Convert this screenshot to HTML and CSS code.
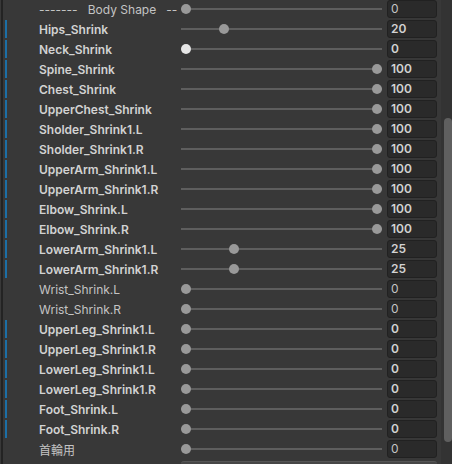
FILE: index.html
```html
<!DOCTYPE html>
<html lang="en">
<head>
    <meta charset="UTF-8">
    <title>Body Shape</title>
    <link rel="stylesheet" href="styles.css">
</head>
<body>
    <div class="panel">
        <div class="gutter"></div>
        <div class="list">
            <div class="row">
                <span class="mark"></span>
                <span class="label">-------   Body Shape   --</span>
                <div class="slider"><span class="thumb" style="left:0px"></span></div>
                <span class="field">0</span>
            </div>
            <div class="row changed">
                <span class="mark"></span>
                <span class="label">Hips_Shrink</span>
                <div class="slider"><span class="thumb" style="left:38px"></span></div>
                <span class="field">20</span>
            </div>
            <div class="row changed">
                <span class="mark"></span>
                <span class="label">Neck_Shrink</span>
                <div class="slider"><span class="thumb hot" style="left:0px"></span></div>
                <span class="field">0</span>
            </div>
            <div class="row changed">
                <span class="mark"></span>
                <span class="label">Spine_Shrink</span>
                <div class="slider"><span class="thumb" style="left:191px"></span></div>
                <span class="field">100</span>
            </div>
            <div class="row changed">
                <span class="mark"></span>
                <span class="label">Chest_Shrink</span>
                <div class="slider"><span class="thumb" style="left:191px"></span></div>
                <span class="field">100</span>
            </div>
            <div class="row changed">
                <span class="mark"></span>
                <span class="label">UpperChest_Shrink</span>
                <div class="slider"><span class="thumb" style="left:191px"></span></div>
                <span class="field">100</span>
            </div>
            <div class="row changed">
                <span class="mark"></span>
                <span class="label">Sholder_Shrink1.L</span>
                <div class="slider"><span class="thumb" style="left:191px"></span></div>
                <span class="field">100</span>
            </div>
            <div class="row changed">
                <span class="mark"></span>
                <span class="label">Sholder_Shrink1.R</span>
                <div class="slider"><span class="thumb" style="left:191px"></span></div>
                <span class="field">100</span>
            </div>
            <div class="row changed">
                <span class="mark"></span>
                <span class="label">UpperArm_Shrink1.L</span>
                <div class="slider"><span class="thumb" style="left:191px"></span></div>
                <span class="field">100</span>
            </div>
            <div class="row changed">
                <span class="mark"></span>
                <span class="label">UpperArm_Shrink1.R</span>
                <div class="slider"><span class="thumb" style="left:191px"></span></div>
                <span class="field">100</span>
            </div>
            <div class="row changed">
                <span class="mark"></span>
                <span class="label">Elbow_Shrink.L</span>
                <div class="slider"><span class="thumb" style="left:191px"></span></div>
                <span class="field">100</span>
            </div>
            <div class="row changed">
                <span class="mark"></span>
                <span class="label">Elbow_Shrink.R</span>
                <div class="slider"><span class="thumb" style="left:191px"></span></div>
                <span class="field">100</span>
            </div>
            <div class="row changed">
                <span class="mark"></span>
                <span class="label">LowerArm_Shrink1.L</span>
                <div class="slider"><span class="thumb" style="left:48px"></span></div>
                <span class="field">25</span>
            </div>
            <div class="row changed">
                <span class="mark"></span>
                <span class="label">LowerArm_Shrink1.R</span>
                <div class="slider"><span class="thumb" style="left:48px"></span></div>
                <span class="field">25</span>
            </div>
            <div class="row">
                <span class="mark"></span>
                <span class="label">Wrist_Shrink.L</span>
                <div class="slider"><span class="thumb" style="left:0px"></span></div>
                <span class="field">0</span>
            </div>
            <div class="row">
                <span class="mark"></span>
                <span class="label">Wrist_Shrink.R</span>
                <div class="slider"><span class="thumb" style="left:0px"></span></div>
                <span class="field">0</span>
            </div>
            <div class="row changed">
                <span class="mark"></span>
                <span class="label">UpperLeg_Shrink1.L</span>
                <div class="slider"><span class="thumb" style="left:0px"></span></div>
                <span class="field">0</span>
            </div>
            <div class="row changed">
                <span class="mark"></span>
                <span class="label">UpperLeg_Shrink1.R</span>
                <div class="slider"><span class="thumb" style="left:0px"></span></div>
                <span class="field">0</span>
            </div>
            <div class="row changed">
                <span class="mark"></span>
                <span class="label">LowerLeg_Shrink1.L</span>
                <div class="slider"><span class="thumb" style="left:0px"></span></div>
                <span class="field">0</span>
            </div>
            <div class="row changed">
                <span class="mark"></span>
                <span class="label">LowerLeg_Shrink1.R</span>
                <div class="slider"><span class="thumb" style="left:0px"></span></div>
                <span class="field">0</span>
            </div>
            <div class="row changed">
                <span class="mark"></span>
                <span class="label">Foot_Shrink.L</span>
                <div class="slider"><span class="thumb" style="left:0px"></span></div>
                <span class="field">0</span>
            </div>
            <div class="row changed">
                <span class="mark"></span>
                <span class="label">Foot_Shrink.R</span>
                <div class="slider"><span class="thumb" style="left:0px"></span></div>
                <span class="field">0</span>
            </div>
            <div class="row">
                <span class="mark"></span>
                <span class="label">首輪用</span>
                <div class="slider"><span class="thumb" style="left:0px"></span></div>
                <span class="field">0</span>
            </div>
            <!-- next control, cut off by the panel edge -->
            <div class="more"></div>
        </div>
        <div class="scrollbar">
            <div class="scroll-thumb"></div>
        </div>
    </div>
</body>
</html>
```

FILE: styles.css
```css
body
{
    margin:0;
    background-color:#383838;
    font-family:Inter, "Noto Sans CJK JP", sans-serif;
    font-size:12px;
    color:#c4c4c4;
    overflow:hidden;
}
.panel
{
    display:flex;
    height:464px;
}
.gutter
{
    width:2px;
    margin-left:1px;
    background-color:#232323;
}
.list
{
    flex:1;
    margin-top:-1px;
}
.row
{
    display:flex;
    align-items:center;
    height:20px;
}
.mark
{
    width:2px;
    height:18px;
    margin-left:2px;
}
.changed .mark
{
    background-color:#1c6fa6;
}
.label
{
    width:142px;
    margin-left:32px;
    white-space:pre;
    overflow:visible;
}
.changed .label
{
    font-weight:600;
    color:#d2d2d2;
}
.slider
{
    position:relative;
    width:201px;
    height:20px;
}
.slider::before
{
    content:"";
    position:absolute;
    left:0;
    right:0;
    top:9px;
    height:2px;
    background-color:#5e5e5e;
}
.thumb
{
    position:absolute;
    top:5px;
    width:10px;
    height:10px;
    border-radius:50%;
    background-color:#999999;
}
.thumb.hot
{
    background-color:#e6e6e6;
}
.field
{
    box-sizing:border-box;
    width:50px;
    height:18px;
    margin-left:5px;
    padding-left:3px;
    line-height:16px;
    background-color:#2a2a2a;
    border:1px solid #212121;
    border-radius:3px;
}
.changed .field
{
    font-weight:600;
    color:#d2d2d2;
}
.more
{
    width:256px;
    height:12px;
    margin-top:2px;
    margin-left:178px;
    border-radius:3px;
    background-color:#464646;
    border-top:1px solid #555555;
}
.scrollbar
{
    width:11px;
    margin-left:4px;
    background-color:#333333;
}
.scroll-thumb
{
    width:8px;
    height:324px;
    margin-top:118px;
    margin-left:3px;
    border-radius:4px;
    background-color:#5f5f5f;
}
```
